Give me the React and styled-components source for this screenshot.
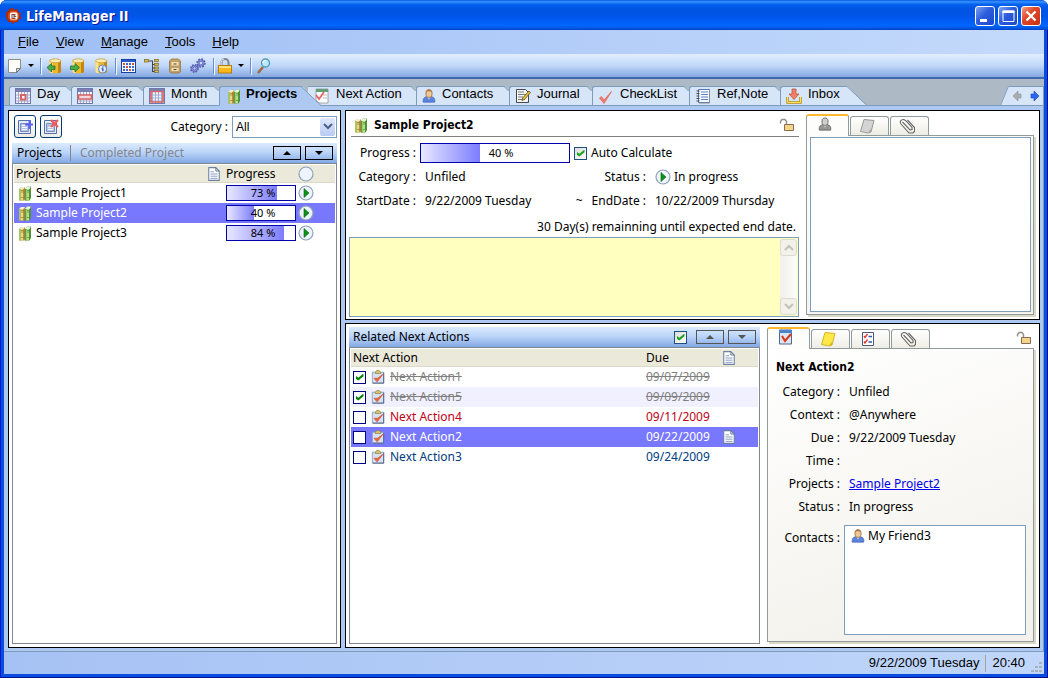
import React, { useState } from "react";
import styled, { createGlobalStyle } from "styled-components";

const uiFont = `"Noto Sans", "DejaVu Sans Condensed", sans-serif`;
const headingFont = `"DejaVu Sans Condensed", "Noto Sans", sans-serif`;
const menuFont = `"Liberation Sans", Arial, sans-serif`;

const MENUS = ["File", "View", "Manage", "Tools", "Help"];

const PROJECTS = [
  { id: 1, name: "Sample Project1", progress: 73 },
  { id: 2, name: "Sample Project2", progress: 40 },
  { id: 3, name: "Sample Project3", progress: 84 },
];

const ACTIONS = [
  { id: 1, name: "Next Action1", due: "09/07/2009", done: true, tone: "done" },
  { id: 5, name: "Next Action5", due: "09/09/2009", done: true, tone: "done" },
  { id: 4, name: "Next Action4", due: "09/11/2009", tone: "late" },
  { id: 2, name: "Next Action2", due: "09/22/2009", note: true },
  { id: 3, name: "Next Action3", due: "09/24/2009" },
];

/* ---------- icons ---------- */

const Icon = ({ size = 16, children }) => (
  <svg width={size} height={size} viewBox="0 0 16 16" aria-hidden="true">
    {children}
  </svg>
);

const AppLogo = () => (
  <Icon>
    <path d="M7 0l2 2 3-1 0 3 3 1-1 3 2 2-3 1-1 3-3 0-2 2-2-2-3 0-1-3-2-2 1-2-1-3 3-1 1-2z" fill="#a82a10" />
    <circle cx="7.500" cy="8" r="5.500" fill="#d8521c" />
    <rect x="4" y="4.500" width="7.500" height="7" rx="1.500" fill="#fff" />
    <path d="M5.500 6h4v1h-3v3h3v1h-4z" fill="#a03820" />
    <path d="M7.500 6.500l3 2-3 1.500z" fill="#555" />
  </Icon>
);

const PageIcon = () => (
  <Icon>
    <path d="M1.500 1.500h12v9l-4 4h-8z" fill="#fcfcf8" stroke="#8c8c88" />
    <path d="M13.500 10.500h-4v4z" fill="#d8d8d0" stroke="#55554f" strokeWidth=".7" />
  </Icon>
);

const Cylinder = () => (
  <g>
    <path d="M3.500 3v10.500c0 2.500 11.500 2.500 11.500 0V3z" fill="#f0b929" />
    <path d="M3.500 3v10.500c0 1 1 1.500 3 1.700V3z" fill="#fbe58c" />
    <path d="M12 3v12.200c2-.4 3-.9 3-1.700V3z" fill="#c48611" />
    <ellipse cx="9.200" cy="2.800" rx="5.700" ry="1.900" fill="#ffeeb0" stroke="#c3922a" strokeWidth=".7" />
  </g>
);

const DbImportIcon = () => (
  <Icon>
    <Cylinder />
    <path d="M1 9.500l4.500-4V8H9v3.500H5.500V14z" fill="#49ad49" stroke="#23702c" strokeWidth=".8" />
  </Icon>
);

const DbExportIcon = () => (
  <Icon>
    <Cylinder />
    <path d="M10.500 9.500L6 5.500V8H1.500v3.500H6V14z" fill="#49ad49" stroke="#23702c" strokeWidth=".8" />
  </Icon>
);

const DbInfoIcon = () => (
  <Icon>
    <Cylinder />
    <circle cx="10.500" cy="11" r="4" fill="#e4eefc" stroke="#6a86bc" />
    <path d="M10 8.500h1.500v1H10zM9.500 10.200h2v3h-1.300v-2h-.7z" fill="#2448a8" />
  </Icon>
);

const CalendarIcon = () => (
  <Icon>
    <rect x=".5" y="1.500" width="14" height="13" fill="#fff" stroke="#1840a0" />
    <path d="M1 2h13v2H1z" fill="#2a5cc8" />
    <path d="M2 5h2v2H2zM11 5h2v2h-2zM5 8h2v2H5zM8 11h2v2H8z" fill="#e0502c" />
    <path d="M5 5h2v2H5zM8 5h2v2H8zM2 8h2v2H2zM8 8h2v2H8zM11 8h2v2h-2zM2 11h2v2H2zM5 11h2v2H5zM11 11h2v2h-2z" fill="#3868d0" />
  </Icon>
);

const TreeIcon = () => (
  <Icon>
    <path d="M4 3h5M8.500 3v11M8.500 6.500H11M8.500 10H11M8.500 13.500H11" stroke="#444" fill="none" />
    <g fill="#d9bd55" stroke="#7c6420" strokeWidth=".7">
      <rect x=".5" y="1.500" width="4" height="2.500" />
      <rect x="10.500" y="1.500" width="4" height="2" />
      <rect x="10.500" y="5.300" width="4" height="2" />
      <rect x="10.500" y="9" width="4" height="2" />
      <rect x="10.500" y="12.500" width="4" height="2" />
    </g>
  </Icon>
);

const CabinetIcon = () => (
  <Icon>
    <path d="M2.500 3l2-2h7l2 2v10.500l-1.500 1.500h-8l-1.500-1.500z" fill="#c8a468" stroke="#94723c" strokeWidth=".8" />
    <path d="M4 3.500h8v4.500H4zM4 9.500h8v4H4z" fill="#f2dfb4" stroke="#a88850" strokeWidth=".6" />
    <path d="M6.500 5.500h3v1h-3zM6.500 11h3v1h-3z" fill="#5a4424" />
  </Icon>
);

const GearsIcon = () => (
  <Icon>
    <g fill="none" stroke="#5058b0">
      <circle cx="11" cy="5" r="2.500" strokeWidth="2" />
      <circle cx="11" cy="5" r="4" strokeWidth="1.500" strokeDasharray="1.800 1.300" />
      <circle cx="4.500" cy="10.500" r="2.300" strokeWidth="2" />
      <circle cx="4.500" cy="10.500" r="3.700" strokeWidth="1.500" strokeDasharray="1.600 1.300" />
    </g>
    <circle cx="11" cy="5" r="2.500" fill="none" stroke="#8c92d8" />
    <circle cx="4.500" cy="10.500" r="2.300" fill="none" stroke="#8c92d8" />
  </Icon>
);

const LockIcon = () => (
  <Icon>
    <path d="M4.500 8V4.500a3.500 3.500 0 017 0V8" fill="none" stroke="#80848c" strokeWidth="2" />
    <path d="M4.200 8V4.500a3.800 3.800 0 013-3.600" fill="none" stroke="#e6e6ea" />
    <rect x="1.500" y="7.500" width="13" height="7.500" fill="#fbb81a" stroke="#b87c08" />
    <path d="M2 8h12v2H2z" fill="#ffe07a" />
  </Icon>
);

const SearchIcon = () => (
  <Icon>
    <path d="M7 9l-5 6" stroke="#a06838" strokeWidth="2.500" />
    <circle cx="9.500" cy="5" r="4" fill="#b8e8fa" stroke="#4896b8" strokeWidth="1.300" />
    <path d="M7 5a2.500 2.500 0 013-2.500" stroke="#fff" fill="none" strokeWidth="1.300" />
  </Icon>
);

const GridCalendar = ({ mark }) => (
  <Icon>
    <rect x=".5" y=".5" width="15" height="15" fill="#f2f4fc" stroke="#7078a8" />
    <path d="M1 1h14v3H1z" fill="#7880b4" />
    <path d="M3.500 4v11M6.500 4v11M9.500 4v11M12.500 4v11M1 7h14M1 10h14M1 13h14" stroke="#a4aad0" />
    {mark}
  </Icon>
);

const DayIcon = () => (
  <GridCalendar mark={<path d="M6 7h4.500v4.500H6z" fill="#fff" stroke="#d86464" strokeWidth="2" />} />
);
const WeekIcon = () => (
  <GridCalendar mark={<path d="M1.500 7h13v4h-13z" fill="#f4d8dc" stroke="#d86464" strokeWidth="1.700" />} />
);
const MonthIcon = () => (
  <GridCalendar mark={<path d="M2 3.500h12v10.500H2z" fill="none" stroke="#d86464" strokeWidth="1.700" />} />
);

const BooksIcon = () => (
  <svg width="13" height="15" viewBox="0 0 13 15" aria-hidden="true">
    <path d="M1 3l2-2h4v12l-1 1.500H1.500L1 14z" fill="#b8963c" />
    <path d="M1 3h2v11.500H1.500L1 14z" fill="#a8c468" />
    <path d="M3 3h2v11.500H3z" fill="#ecd488" />
    <path d="M1 3l2-2h4L5.500 3z" fill="#f4eed4" />
    <path d="M3 4.500h3M3 6h3M3 11.500h3" stroke="#a07828" strokeWidth=".7" />
    <path d="M7 3l2-2.500h4V12l-1.500 2.500H7z" fill="#4c9434" />
    <path d="M7.500 3H9v11.500H7.500z" fill="#8cd468" />
    <path d="M9 3h2v11.500H9z" fill="#b8d88c" />
    <path d="M7 3l2-2.500h4L11.500 3z" fill="#eaf6e0" />
    <path d="M9 4.500h3M9 6h3M9 11.500h3" stroke="#5c8c34" strokeWidth=".7" />
    <path d="M7 3v11.500" stroke="#6c6c34" strokeWidth=".8" />
  </svg>
);

const TickPageIcon = () => (
  <Icon>
    <path d="M2 1h12v14H5L2 12z" fill="#fff" stroke="#909498" strokeWidth=".8" />
    <path d="M2 1h12v3H2z" fill="#60a078" />
    <path d="M9 6h4v2H9zM9 9h4v2H9z" fill="#dcdcdc" />
    <path d="M2 7l3 4 5-7" stroke="#e86060" strokeWidth="1.700" fill="none" />
  </Icon>
);

const PersonIcon = ({ gray, size = 14 }) => (
  <Icon size={size}>
    <path d="M1.500 15c-1-5 2.500-6 4.500-6.500h4c2 .5 5.500 1.500 4.500 6.500z" fill={gray ? "#969696" : "#5c84dc"} stroke={gray ? "#555" : "#3c5cac"} strokeWidth=".8" />
    <path d="M6 9l2 3 2-3z" fill={gray ? "#d4d4d4" : "#b8d4f8"} />
    <path d="M4.500 4.500C4.500 0 11.500 0 11.500 4.500S10 9.500 8 9.500 4.500 9 4.500 4.500z" fill={gray ? "#cfcfcf" : "#f0c898"} stroke={gray ? "#555" : "#94602c"} strokeWidth=".9" />
    {!gray && <path d="M4.500 4c0-5 7-5 7 0-1-2-6-2-7 0z" fill="#a8743c" />}
  </Icon>
);

const JournalIcon = () => (
  <Icon>
    <path d="M1.500 1.500h9l3 3v10h-12z" fill="#f4f4f4" stroke="#44484c" />
    <path d="M3 4h6M3 6.500h8M3 9h5M3 11.500h7" stroke="#787c80" />
    <path d="M14 3l1.500 1.500-6 7L7 12.500l.8-2.700z" fill="#e8c040" stroke="#685010" strokeWidth=".8" />
  </Icon>
);

const CheckIcon = () => (
  <Icon>
    <path d="M1.500 10l2-1.500L6 12l7.500-8.500L6 15.500z" fill="#f08070" stroke="#e06858" strokeWidth=".8" />
  </Icon>
);

const NotebookIcon = () => (
  <Icon>
    <path d="M3.500 1.500h11v13h-11z" fill="#f6faff" stroke="#5878b0" />
    <path d="M6 4h7M6 6.500h7M6 9h7M6 11.500h7" stroke="#5c84c8" />
    <path d="M1.500 3h3M1.500 5.500h3M1.500 8h3M1.500 10.500h3M1.500 13h3" stroke="#3c4860" />
    <path d="M14.500 2v13H4" stroke="#888c94" fill="none" />
  </Icon>
);

const InboxIcon = () => (
  <Icon>
    <path d="M1.500 9v5.500h13V9" fill="none" stroke="#b88a10" strokeWidth="2.500" />
    <path d="M1.500 9v5.500h13V9" fill="none" stroke="#ffe45c" />
    <path d="M6 1h4v5h3l-5 5.500L3 6h3z" fill="#f08068" stroke="#b84c2c" strokeWidth=".7" />
  </Icon>
);

const AddNoteIcon = () => (
  <Icon>
    <path d="M1.500 1.500h12v13h-12z" fill="#e4ecfa" stroke="#5870a8" />
    <path d="M3.500 4.500h8v8h-8z" fill="#b4c4e4" stroke="#7c90c0" />
    <path d="M5 6.500h4M5 8.500h5M5 10.500h5" stroke="#f4f8ff" />
    <path d="M12.500 1v9M8 5.500h8" stroke="#6060f8" strokeWidth="2" />
  </Icon>
);

const RemoveNoteIcon = () => (
  <Icon>
    <path d="M1.500 1.500h12v13h-12z" fill="#e4ecfa" stroke="#5870a8" />
    <path d="M3.500 4.500h8v8h-8z" fill="#b4c4e4" stroke="#7c90c0" />
    <path d="M5 8.500h5M5 10.500h5" stroke="#f4f8ff" />
    <path d="M8 1l7 7M15 1L8 8" stroke="#f85858" strokeWidth="2.200" />
  </Icon>
);

const DocIcon = ({ size = 14 }) => (
  <Icon size={size}>
    <path d="M2 .7h8l4 4v10.600H2z" fill="#fff" stroke="#6c80a4" strokeWidth="1.200" />
    <path d="M10 .7v4h4z" fill="#c8d4e8" stroke="#4c6084" strokeWidth=".8" />
    <path d="M4 5.500h4M4 8h8M4 10.500h8M4 13h8" stroke="#7c90b8" />
  </Icon>
);

const StatusIcon = ({ empty }) => (
  <Icon>
    <circle cx="8" cy="8" r="7" fill="#eef4fc" stroke="#90a0b8" strokeWidth="1.200" />
    {!empty && <path d="M6 3.500L11 8l-5 4.500z" fill="#0c9418" stroke="#08600f" strokeWidth=".6" />}
  </Icon>
);

const UnlockIcon = () => (
  <Icon>
    <path d="M1.500 6.500V4.500l1.500-2h3l1.500 2v3" stroke="#988e88" strokeWidth="1.400" fill="none" />
    <path d="M5.500 7.500h9v6h-9z" fill="#f2d48a" stroke="#8c6c50" />
  </Icon>
);

const TaskIcon = ({ size = 14 }) => (
  <Icon size={size}>
    <path d="M1.500 2.500h13v12.500h-13z" fill="#d4e2f4" stroke="#8c9cbc" />
    <path d="M14.500 3v12H2" stroke="#4c5c80" fill="none" />
    <path d="M5 4V2.500L6.500.7h3L11 2.500V4z" fill="#dcc868" stroke="#80703c" strokeWidth=".7" />
    <path d="M3.500 9.500l3.500 4 6.500-8.500-6 4.500z" fill="#e46848" stroke="#dc5838" />
  </Icon>
);

const CheckedPageIcon = () => (
  <Icon>
    <path d="M1.500 1h12v14h-12z" fill="#dce6f2" stroke="#50688c" />
    <path d="M1 1h13v3H1z" fill="#4c84cc" />
    <path d="M4 7l3 5 6-7" stroke="#d83a20" strokeWidth="2.200" fill="none" />
  </Icon>
);

const StickyIcon = ({ gray }) => (
  <Icon>
    <path d="M5 1.500l10 1L12 14 9 15l-7.500-1.500z" fill={gray ? "#d4d4d4" : "#ffe848"} stroke={gray ? "#999" : "#d4b428"} />
    <path d="M12 14l-.5-3.500L9 15z" fill={gray ? "#aaa" : "#d8b020"} />
  </Icon>
);

const ListIcon = () => (
  <Icon>
    <path d="M2.500 1.500h11v13h-11z" fill="#fff" stroke="#4c587c" />
    <path d="M4 5l1 1.500L7.500 3M4 10.500L5 12l2.500-3.500" stroke="#e03c2c" strokeWidth="1.400" fill="none" />
    <path d="M8.500 5.500H12M8.500 11H12" stroke="#2c58b0" strokeWidth="1.300" />
  </Icon>
);

const ClipIcon = () => (
  <Icon>
    <path d="M3.500 4l7.500 8 2-.5v-2L6.500 2.500C3.500 0 0 3 2 6l8 9h4l1.500-1.500V9.500L8.500 2" stroke="#666" strokeWidth="1.100" fill="none" />
  </Icon>
);

const Triangle = ({ down, color = "#000" }) => (
  <svg width="8" height="4" viewBox="0 0 8 4" aria-hidden="true">
    <path d={down ? "M0 0h8L4 4z" : "M4 0l4 4H0z"} fill={color} />
  </svg>
);

const Chevron = ({ up, color = "#4d6185" }) => (
  <svg width="10" height="7" viewBox="0 0 10 7" aria-hidden="true">
    <path d={up ? "M1 6l4-4 4 4" : "M1 1l4 4 4-4"} fill="none" stroke={color} strokeWidth="2" />
  </svg>
);

const NavArrow = ({ right }) => (
  <svg width="9" height="12" viewBox="0 0 9 12" aria-hidden="true">
    {right ? (
      <path d="M1 4h3V1l5 5-5 5V8H1z" fill="#2868f0" stroke="#1844b0" strokeWidth=".6" />
    ) : (
      <path d="M8 4H5V1L0 6l5 5V8h3z" fill="#a8acb0" stroke="#8c9094" strokeWidth=".6" />
    )}
  </svg>
);

const SmallArrow = () => (
  <svg width="6" height="3" viewBox="0 0 6 3" aria-hidden="true">
    <path d="M0 0h6L3 3z" />
  </svg>
);

const TABS = [
  { label: "Day", icon: DayIcon, width: 62 },
  { label: "Week", icon: WeekIcon, width: 72 },
  { label: "Month", icon: MonthIcon, width: 76 },
  { label: "Projects", icon: BooksIcon, width: 81, active: true },
  { label: "Next Action", icon: TickPageIcon, width: 116, covered: true },
  { label: "Contacts", icon: PersonIcon, width: 93 },
  { label: "Journal", icon: JournalIcon, width: 83 },
  { label: "CheckList", icon: CheckIcon, width: 97 },
  { label: "Ref,Note", icon: NotebookIcon, width: 91 },
  { label: "Inbox", icon: InboxIcon, width: 66, last: true },
];

/* ---------- shell ---------- */

const App = () => (
  <>
    <GlobalStyle />
    <Window>
      <TitleBar>
        <AppLogo />
        <Title>LifeManager II</Title>
        <CaptionButton aria-label="Minimize">
          <svg width="18" height="18" viewBox="0 0 18 18"><path d="M4 12h7v3H4z" fill="#fff" /></svg>
        </CaptionButton>
        <CaptionButton aria-label="Maximize">
          <svg width="18" height="18" viewBox="0 0 18 18">
            <path d="M4 4h11v10.500H4z" fill="none" stroke="#fff" />
            <path d="M3.500 3.500h12v2.500h-12z" fill="#fff" />
          </svg>
        </CaptionButton>
        <CaptionButton $close aria-label="Close">
          <svg width="18" height="18" viewBox="0 0 18 18">
            <path d="M4.500 4.500l9 9M13.500 4.500l-9 9" stroke="#fff" strokeWidth="2.300" />
          </svg>
        </CaptionButton>
      </TitleBar>
      <Frame>
        <MenuBar>
          {MENUS.map((menu) => (
            <MenuItem key={menu}>
              <u>{menu[0]}</u>
              {menu.slice(1)}
            </MenuItem>
          ))}
        </MenuBar>
        <Toolbar>
          <ToolButton $width={20} aria-label="New"><PageIcon /></ToolButton>
          <ToolButton $width={11} aria-label="New options"><SmallArrow /></ToolButton>
          <ToolSeparator />
          <ToolButton aria-label="Import"><DbImportIcon /></ToolButton>
          <ToolButton aria-label="Export"><DbExportIcon /></ToolButton>
          <ToolButton aria-label="Database info"><DbInfoIcon /></ToolButton>
          <ToolSeparator />
          <ToolButton aria-label="Calendar"><CalendarIcon /></ToolButton>
          <ToolButton aria-label="Categories"><TreeIcon /></ToolButton>
          <ToolButton aria-label="Cabinet"><CabinetIcon /></ToolButton>
          <ToolButton aria-label="Settings"><GearsIcon /></ToolButton>
          <ToolSeparator />
          <ToolButton $width={20} aria-label="Lock"><LockIcon /></ToolButton>
          <ToolButton $width={11} aria-label="Lock options"><SmallArrow /></ToolButton>
          <ToolSeparator />
          <ToolButton aria-label="Search"><SearchIcon /></ToolButton>
        </Toolbar>
        <TabStrip>
          {TABS.map(({ label, icon: TabGlyph, width, active, covered, last }) => (
            <MainTab key={label} $width={width} $active={active} $covered={covered}>
              <TabGlyph />
              <TabText>{label}</TabText>
              {active || last ? (
                <Slope width="22" height="20" viewBox="0 0 22 20" aria-hidden="true">
                  <path d="M0 0h1l20 20H0z" fill={active ? "#adc9f1" : "#d7e5f8"} />
                  {active && <path d="M2 0h6L8 7z" fill="#aeb9c6" />}
                  <path d="M0 .5h1l20 19" fill="none" stroke="#7b9cba" />
                  {last && <path d="M0 19.500h22" stroke="#7b9cba" />}
                </Slope>
              ) : (
                <Bevel width="5" height="5" viewBox="0 0 5 5" aria-hidden="true">
                  <path d="M0 0h5v5z" fill="#aeb9c6" />
                  <path d="M0 .5l5 5" stroke="#7b9cba" />
                </Bevel>
              )}
            </MainTab>
          ))}
          <StripFill />
          <TabNav>
            <svg width="9" height="20" viewBox="0 0 9 20" aria-hidden="true">
              <path d="M9 0v20H0L8 0z" fill="#d7e5f8" />
              <path d="M.5 19.500L8.500 0M0 19.500h9" stroke="#7b9cba" />
            </svg>
            <NavButtons>
              <NavButton aria-label="Previous tab"><NavArrow /></NavButton>
              <NavButton aria-label="Next tab"><NavArrow right /></NavButton>
            </NavButtons>
          </TabNav>
        </TabStrip>
        <Workspace>
          <ProjectList />
          <RightSide>
            <ProjectDetails />
            <ActionPanel />
          </RightSide>
        </Workspace>
        <StatusBar>
          <span>9/22/2009 Tuesday</span>
          <StatusDivider />
          <span>20:40</span>
          <svg width="12" height="12" viewBox="0 0 12 12" aria-hidden="true">
            <path d="M8 0h3v2H8zM4 4h3v2H4zM8 4h3v2H8zM0 8h3v2H0zM4 8h3v2H4zM8 8h3v2H8z" fill="#a8b0b8" />
          </svg>
        </StatusBar>
      </Frame>
    </Window>
  </>
);

/* ---------- project list ---------- */

const ProjectList = () => {
  const [selected, setSelected] = useState(2);

  return (
    <Panel>
      <ListTools>
        <FramedButton aria-label="Add project"><AddNoteIcon /></FramedButton>
        <FramedButton aria-label="Delete project"><RemoveNoteIcon /></FramedButton>
        <CategoryLabel htmlFor="category">Category :</CategoryLabel>
        <SelectBox>
          <Select id="category" defaultValue="All">
            <option>All</option>
            <option>Unfiled</option>
          </Select>
          <SelectArrow><Chevron /></SelectArrow>
        </SelectBox>
      </ListTools>
      <BarHeader>
        <BarTab $active>Projects</BarTab>
        <BarTab>Completed Project</BarTab>
        <MoveButtons>
          <MoveButton aria-label="Move up"><Triangle /></MoveButton>
          <MoveButton aria-label="Move down"><Triangle down /></MoveButton>
        </MoveButtons>
      </BarHeader>
      <ListBox>
        <Table>
          <colgroup>
            <col />
            <col width="19" />
            <col width="72" />
            <col width="39" />
          </colgroup>
          <thead>
            <tr>
              <th>Projects</th>
              <th><CellIcon><DocIcon /></CellIcon></th>
              <th>Progress</th>
              <th><CellIcon><StatusIcon empty /></CellIcon></th>
            </tr>
          </thead>
          <tbody>
            {PROJECTS.map((project) => (
              <TableRow
                key={project.id}
                $selected={project.id === selected}
                onClick={() => setSelected(project.id)}
              >
                <td>
                  <NameCell $indent={2}>
                    <BooksIcon />
                    {project.name}
                  </NameCell>
                </td>
                <td />
                <td><ProgressBar value={project.progress} /></td>
                <td><CellIcon><StatusIcon /></CellIcon></td>
              </TableRow>
            ))}
          </tbody>
        </Table>
      </ListBox>
    </Panel>
  );
};

const ProgressBar = ({ value, large }) => (
  <Bar $large={large}>
    <BarFill style={{ width: `${value}%` }} />
    <BarText $large={large}>{value} %</BarText>
  </Bar>
);

/* ---------- project details ---------- */

const ProjectDetails = () => (
  <TopPanel>
    <Details>
      <DetailHeader>
        <BooksIcon />
        <Heading>Sample Project2</Heading>
        <UnlockIcon />
      </DetailHeader>
      <DetailRow>
        <FieldLabel $width={67}>Progress :</FieldLabel>
        <ProgressBar value={40} large />
        <Check id="auto-calculate" type="checkbox" defaultChecked />
        <label htmlFor="auto-calculate">Auto Calculate</label>
      </DetailRow>
      <DetailRow>
        <FieldLabel $width={67}>Category :</FieldLabel>
        <FieldValue $width={136}>Unfiled</FieldValue>
        <FieldLabel $width={86}>Status :</FieldLabel>
        <FieldValue>
          <StatusIcon />
          In progress
        </FieldValue>
      </DetailRow>
      <DetailRow>
        <FieldLabel $width={67}>StartDate :</FieldLabel>
        <FieldValue $width={136}>9/22/2009 Tuesday</FieldValue>
        <FieldLabel $width={86}>
          <Tilde>~</Tilde>
          EndDate :
        </FieldLabel>
        <FieldValue>10/22/2009 Thursday</FieldValue>
      </DetailRow>
      <Remaining>30 Day(s) remainning until expected end date.</Remaining>
      <MemoBox>
        <Memo aria-label="Project memo" />
        <ScrollTrack>
          <ScrollButton aria-label="Scroll up"><Chevron up color="#c4c2b8" /></ScrollButton>
          <ScrollButton aria-label="Scroll down"><Chevron color="#c4c2b8" /></ScrollButton>
        </ScrollTrack>
      </MemoBox>
    </Details>
    <SideTabs>
      <SideTabRow>
        <SideTab $active aria-label="Contacts"><PersonIcon gray /></SideTab>
        <SideTab aria-label="Notes"><StickyIcon gray /></SideTab>
        <SideTab aria-label="Attachments"><ClipIcon /></SideTab>
      </SideTabRow>
      <SideBody $plain>
        <SideList />
      </SideBody>
    </SideTabs>
  </TopPanel>
);

/* ---------- next actions ---------- */

const ActionPanel = () => {
  const [selected, setSelected] = useState(2);

  return (
    <BottomPanel>
      <ActionList>
        <BarHeader>
          <BarTitle>Related Next Actions</BarTitle>
          <Check type="checkbox" defaultChecked aria-label="Show completed" />
          <MoveButtons>
            <MoveButton $muted aria-label="Move up"><Triangle color="#555" /></MoveButton>
            <MoveButton $muted aria-label="Move down"><Triangle down color="#555" /></MoveButton>
          </MoveButtons>
        </BarHeader>
        <ListBox>
          <Table>
            <colgroup>
              <col />
              <col width="74" />
              <col width="40" />
            </colgroup>
            <thead>
              <tr>
                <th>Next Action</th>
                <th>Due</th>
                <th><NoteCell><DocIcon /></NoteCell></th>
              </tr>
            </thead>
            <tbody>
              {ACTIONS.map((action, index) => (
                <TableRow
                  key={action.id}
                  $selected={action.id === selected}
                  $striped={index === 1}
                  $tone={action.tone || "open"}
                  onClick={() => setSelected(action.id)}
                >
                  <td>
                    <NameCell $indent={0}>
                      <Check
                        $square
                        type="checkbox"
                        defaultChecked={action.done}
                        aria-label={`${action.name} done`}
                      />
                      <TaskIcon />
                      <ActionText>{action.name}</ActionText>
                    </NameCell>
                  </td>
                  <td><ActionText>{action.due}</ActionText></td>
                  <td>{action.note && <NoteCell><DocIcon /></NoteCell>}</td>
                </TableRow>
              ))}
            </tbody>
          </Table>
        </ListBox>
      </ActionList>
      <ActionTabs>
        <SideTabRow>
          <SideTab $active aria-label="Action"><CheckedPageIcon /></SideTab>
          <SideTab aria-label="Note"><StickyIcon /></SideTab>
          <SideTab aria-label="Checklist"><ListIcon /></SideTab>
          <SideTab aria-label="Attachments"><ClipIcon /></SideTab>
          <RowLock><UnlockIcon /></RowLock>
        </SideTabRow>
        <SideBody>
          <ActionHeading>Next Action2</ActionHeading>
          <ActionRow><FieldLabel $width={72}>Category :</FieldLabel><FieldValue>Unfiled</FieldValue></ActionRow>
          <ActionRow><FieldLabel $width={72}>Context :</FieldLabel><FieldValue>@Anywhere</FieldValue></ActionRow>
          <ActionRow><FieldLabel $width={72}>Due :</FieldLabel><FieldValue>9/22/2009 Tuesday</FieldValue></ActionRow>
          <ActionRow><FieldLabel $width={72}>Time :</FieldLabel></ActionRow>
          <ActionRow>
            <FieldLabel $width={72}>Projects :</FieldLabel>
            <FieldValue><a href="#project">Sample Project2</a></FieldValue>
          </ActionRow>
          <ActionRow><FieldLabel $width={72}>Status :</FieldLabel><FieldValue>In progress</FieldValue></ActionRow>
          <ContactRow>
            <FieldLabel $width={72}>Contacts :</FieldLabel>
            <ContactList>
              <Contact>
                <PersonIcon />
                My Friend3
              </Contact>
            </ContactList>
          </ContactRow>
        </SideBody>
      </ActionTabs>
    </BottomPanel>
  );
};

/* ---------- styles ---------- */

const GlobalStyle = createGlobalStyle`
  * {
    box-sizing: border-box;
  }

  body {
    margin: 0;
    font: 12px/16px ${uiFont};
    color: #000;
  }

  button {
    font: inherit;
    color: inherit;
    padding: 0;
    border: 0;
    background: none;
  }

  svg {
    display: block;
    flex-shrink: 0;
  }
`;

const Window = styled.div`
  min-height: 100vh;
  display: flex;
  flex-direction: column;
  background: #0a4be0;
  border-radius: 7px 7px 0 0;
  box-shadow: inset 1px 0 #0019cf, inset -1px -1px #00138c;
`;

const TitleBar = styled.header`
  height: 30px;
  display: flex;
  align-items: center;
  gap: 3px;
  padding: 2px 7px 0 6px;
  border-radius: 7px 7px 0 0;
  background: linear-gradient(
    #0058e6 0%,
    #3a93ff 6%,
    #0463ee 14%,
    #0054e3 30%,
    #0055e8 55%,
    #0066ff 85%,
    #0058e0 94%,
    #003dc4 100%
  );
`;

const Title = styled.h1`
  flex: 1;
  margin: 0 0 0 1px;
  font: bold 14px/18px ${headingFont};
  color: #fff;
  text-shadow: 1px 1px #0f1089;
`;

const CaptionButton = styled.button`
  width: 20px;
  height: 20px;
  border: 1px solid #fff;
  border-radius: 3px;
  background: ${({ $close }) =>
    $close
      ? "linear-gradient(135deg, #f0a088, #e0482a 40%, #c83010)"
      : "linear-gradient(135deg, #7ca4f4, #2c5cdc 45%, #1c48cc)"};
`;

const Frame = styled.div`
  flex: 1;
  display: flex;
  flex-direction: column;
  margin: 0 4px 4px;
  background: #adc9f1;
`;

const MenuBar = styled.nav`
  height: 24px;
  display: flex;
  padding-left: 5px;
  background: linear-gradient(90deg, #9ebef5, #c4dafb);
`;

const MenuItem = styled.button`
  padding: 0 8px 0 9px;
  font: 13px/22px ${menuFont};
`;

const Toolbar = styled.div`
  height: 25px;
  display: flex;
  align-items: center;
  padding-left: 1px;
  background: linear-gradient(#e2eefe, #c0d8fa 50%, #84a8e0);
  border-bottom: 2px solid #4068b0;
`;

const ToolButton = styled.button`
  width: ${({ $width = 23 }) => $width}px;
  height: 22px;
  display: flex;
  align-items: center;
  justify-content: center;
`;

const ToolSeparator = styled.span`
  width: 1px;
  height: 16px;
  margin: 0 1px 0 4px;
  background: #6a8ccb;
  box-shadow: 1px 1px #f1f9ff;
`;

const TabStrip = styled.div`
  height: 27px;
  display: flex;
  align-items: flex-end;
  background: #aeb9c6;

  &::before {
    content: "";
    width: 5px;
    border-bottom: 1px solid #7b9cba;
  }
`;

const MainTab = styled.button`
  position: relative;
  display: flex;
  align-items: center;
  gap: 6px;
  width: ${({ $width }) => $width}px;
  height: 20px;
  padding: 0 0 0 ${({ $covered, $active }) => ($covered ? 13 : $active ? 7 : 5)}px;
  white-space: nowrap;
  border: 1px solid #7b9cba;
  border-right: 0;
  border-bottom-color: ${({ $active }) => ($active ? "#adc9f1" : "#7b9cba")};
  border-top-left-radius: 3px;
  background: ${({ $active }) => ($active ? "#adc9f1" : "#d7e5f8")};
  z-index: ${({ $active }) => ($active ? 1 : 0)};
  font: ${({ $active }) => ($active ? "bold" : "normal")} 13px/16px ${menuFont};
`;

const TabText = styled.span`
  padding-bottom: 4px;
`;

const Slope = styled.svg`
  position: absolute;
  left: 100%;
  top: -1px;
`;

const Bevel = styled.svg`
  position: absolute;
  right: 0;
  top: -1px;
`;

const StripFill = styled.div`
  flex: 1;
  border-bottom: 1px solid #7b9cba;
`;

const TabNav = styled.div`
  display: flex;
  border-right: 1px solid #7b9cba;
`;

const NavButtons = styled.div`
  display: flex;
  gap: 8px;
  padding: 0 4px;
  border-top: 1px solid #7b9cba;
  border-bottom: 1px solid #7b9cba;
  background: #d7e5f8;
`;

const NavButton = styled.button`
  width: 9px;
  height: 18px;
`;

const Workspace = styled.main`
  flex: 1;
  display: grid;
  grid-template-columns: 333px 1fr;
  gap: 4px;
  padding: 4px 3px 3px 4px;
  border-right: 1px solid #7b9cba;
  border-bottom: 1px solid #7b9cba;
`;

const RightSide = styled.div`
  display: grid;
  grid-template-rows: auto 1fr;
  gap: 3px;
  min-width: 0;
`;

const Panel = styled.section`
  display: flex;
  flex-direction: column;
  padding: 3px;
  border: 1px solid #000;
  background: #fff;
  min-width: 0;
`;

const TopPanel = styled(Panel)`
  flex-direction: row;
  gap: 7px;
  padding-bottom: 2px;
`;

const BottomPanel = styled(Panel)`
  flex-direction: row;
  gap: 7px;
`;

const ListTools = styled.div`
  display: flex;
  align-items: center;
  gap: 4px;
  padding: 1px 0 5px 2px;
`;

const FramedButton = styled.button`
  width: 22px;
  height: 23px;
  display: flex;
  align-items: center;
  justify-content: center;
  border: 1px solid #003c74;
  border-radius: 3px;
  background: linear-gradient(#fff, #ecebe5);
`;

const CategoryLabel = styled.label`
  margin-left: auto;
`;

const SelectBox = styled.div`
  position: relative;
  width: 105px;
  height: 22px;
`;

const Select = styled.select`
  appearance: none;
  width: 100%;
  height: 100%;
  padding: 0 20px 0 3px;
  border: 1px solid #7f9db9;
  border-radius: 0;
  background: #fff;
  color: #000;
  font: 12px ${menuFont};
`;

const SelectArrow = styled.span`
  position: absolute;
  top: 2px;
  right: 2px;
  bottom: 2px;
  width: 15px;
  display: flex;
  align-items: center;
  justify-content: center;
  border-radius: 2px;
  background: linear-gradient(#e0e8fe, #b8cbf4);
  pointer-events: none;
`;

const BarHeader = styled.div`
  height: 20px;
  display: flex;
  align-items: center;
  padding: 0 4px;
  background: linear-gradient(#dcebfe, #b8d2f8 50%, #82a8e4);
`;

const BarTab = styled.button`
  padding: 0 ${({ $active }) => ($active ? 8 : 9)}px 0 ${({ $active }) => ($active ? 1 : 9)}px;
  color: ${({ $active }) => ($active ? "#000" : "#84868c")};
  border-right: ${({ $active }) => ($active ? "1px solid #84868c" : "0")};
`;

const BarTitle = styled.h2`
  flex: 1;
  margin: 0;
  font: 12px/16px ${uiFont};
`;

const MoveButtons = styled.div`
  display: flex;
  gap: 4px;
  margin-left: auto;
`;

const MoveButton = styled.button`
  width: 28px;
  height: 14px;
  display: flex;
  align-items: center;
  justify-content: center;
  border: 1px solid ${({ $muted }) => ($muted ? "#555" : "#000")};
`;

const ListBox = styled.div`
  flex: 1;
  padding: 1px;
  border: 1px solid #828790;
  background: #fff;
`;

const Table = styled.table`
  width: 100%;
  table-layout: fixed;
  border-collapse: collapse;

  th,
  td {
    height: 20px;
    padding: 0 2px;
    text-align: left;
    font-weight: normal;
    white-space: nowrap;
  }

  th {
    height: 18px;
    background: #ebe9da;
    box-shadow: inset 0 -1px #dcd9c8;
  }
`;

const rowColor = ({ $selected, $tone }) => {
  if ($selected) return "#fff";
  if ($tone === "done") return "#808080";
  if ($tone === "late") return "#c00018";
  if ($tone === "open") return "#003c80";
  return "#000";
};

const ActionText = styled.span``;

const TableRow = styled.tr`
  background: ${({ $selected, $striped }) =>
    $selected ? "#7878ff" : $striped ? "#f0f0ff" : "transparent"};
  color: ${rowColor};
  cursor: default;

  ${ActionText} {
    text-decoration: ${({ $tone }) => ($tone === "done" ? "line-through" : "none")};
  }
`;

const NameCell = styled.div`
  display: flex;
  align-items: center;
  gap: 5px;
  padding-left: ${({ $indent }) => $indent}px;
`;

const CellIcon = styled.div`
  display: flex;
`;

const NoteCell = styled.div`
  display: flex;
  padding-left: 2px;
`;

const Bar = styled.div`
  position: relative;
  width: ${({ $large }) => ($large ? 150 : 70)}px;
  height: ${({ $large }) => ($large ? 20 : 16)}px;
  border: 1px solid #0000a8;
  background: #fff;
  color: #000;
`;

const BarFill = styled.div`
  height: 100%;
  background: linear-gradient(90deg, #e8e8ff, #7c7cff);
`;

const BarText = styled.span`
  position: absolute;
  inset: 0;
  display: flex;
  align-items: center;
  justify-content: center;
  padding-left: ${({ $large }) => ($large ? 12 : 4)}px;
  font-size: 11px;
`;

const Details = styled.div`
  flex: 1;
  display: flex;
  flex-direction: column;
  min-width: 0;
`;

const DetailHeader = styled.div`
  height: 23px;
  display: flex;
  align-items: center;
  gap: 7px;
  margin: 0 0 4px 2px;
  padding: 0 4px 0 3px;
  border-bottom: 1px solid #808080;
`;

const Heading = styled.h2`
  flex: 1;
  margin: 0;
  font: bold 12px/16px ${headingFont};
`;

const DetailRow = styled.div`
  height: 24px;
  display: flex;
  align-items: center;
  gap: 4px;
`;

const FieldLabel = styled.span`
  width: ${({ $width }) => $width}px;
  flex-shrink: 0;
  text-align: right;
  white-space: nowrap;
`;

const FieldValue = styled.span`
  width: ${({ $width }) => ($width ? `${$width}px` : "auto")};
  display: flex;
  align-items: center;
  gap: 3px;
  padding-left: 5px;
  white-space: nowrap;

  a {
    color: #0000ee;
  }
`;

const Tilde = styled.span`
  margin-right: 9px;
`;

const Remaining = styled.p`
  margin: 6px 3px 2px;
  text-align: right;
`;

const MemoBox = styled.div`
  flex: 1;
  display: flex;
  min-height: 80px;
  padding: 1px;
  border: 1px solid #7f9db9;
  background: #ffffc0;
`;

const Memo = styled.textarea`
  flex: 1;
  min-width: 0;
  border: 0;
  padding: 2px;
  resize: none;
  overflow: hidden;
  background: transparent;
  font: 12px/16px ${uiFont};
`;

const ScrollTrack = styled.div`
  width: 17px;
  display: flex;
  flex-direction: column;
  justify-content: space-between;
  background: linear-gradient(90deg, #f0efea, #fdfdfb);
`;

const ScrollButton = styled.button`
  height: 17px;
  display: flex;
  align-items: center;
  justify-content: center;
  border: 1px solid #dedcd0;
  border-radius: 3px;
  background: #f2f1ea;
`;

const Check = styled.input`
  appearance: none;
  width: 13px;
  height: 13px;
  flex-shrink: 0;
  display: grid;
  place-items: center;
  margin: 0;
  border: 1px solid ${({ $square }) => ($square ? "#000080" : "#1c5180")};
  background: ${({ $square }) => ($square ? "#fff" : "linear-gradient(135deg, #dcdcd7, #fff)")};

  &:checked::after {
    content: "";
    width: 8px;
    height: 7px;
    background: ${({ $square }) => ($square ? "#008000" : "#21a121")};
    clip-path: polygon(0 30%, 35% 60%, 100% 0, 100% 40%, 35% 100%, 0 72%);
  }
`;

const SideTabs = styled.div`
  width: 230px;
  display: flex;
  flex-direction: column;
`;

const ActionTabs = styled(SideTabs)`
  width: 269px;
`;

const SideTabRow = styled.div`
  height: 21px;
  display: flex;
  align-items: flex-end;
  gap: 1px;
`;

const SideTab = styled.button`
  width: ${({ $active }) => ($active ? 43 : 39)}px;
  height: ${({ $active }) => ($active ? 22 : 19)}px;
  display: flex;
  align-items: center;
  justify-content: center;
  margin-bottom: ${({ $active }) => ($active ? -1 : 0)}px;
  padding: 0 5px ${({ $active }) => ($active ? 4 : 0)}px 0;
  border: 1px solid #919b9c;
  border-bottom: 0;
  border-top: ${({ $active }) => ($active ? "2px solid #ffb830" : "1px solid #919b9c")};
  border-radius: 3px 3px 0 0;
  background: ${({ $active }) => ($active ? "#fdfdfc" : "linear-gradient(#fff, #eeede4)")};
  z-index: 1;
`;

const RowLock = styled.span`
  align-self: center;
  margin-left: auto;
  padding-right: 4px;
`;

const SideBody = styled.div`
  flex: 1;
  display: flex;
  flex-direction: column;
  margin: 0 2px 2px 0;
  padding: ${({ $plain }) => ($plain ? "1px 2px 2px 3px" : "8px 7px 6px 0")};
  border: 1px solid #919b9c;
  box-shadow: 2px 2px #dcd8c8;
  background: linear-gradient(160deg, #fff, #f3f2ec 85%);
`;

const SideList = styled.div`
  flex: 1;
  border: 1px solid #7f9db9;
  background: #fff;
`;

const ActionList = styled.div`
  flex: 1;
  display: flex;
  flex-direction: column;
  min-width: 0;

  ${BarHeader} ${Check} {
    margin-right: 9px;
  }
`;

const ActionHeading = styled.h2`
  margin: 2px 0 5px 8px;
  font: bold 12px/16px ${headingFont};
`;

const ActionRow = styled.div`
  height: 23px;
  display: flex;
  align-items: center;
  gap: 4px;
`;

const ContactRow = styled.div`
  flex: 1;
  display: flex;
  gap: 4px;
  padding-top: 7px;

  ${FieldLabel} {
    padding-top: 5px;
  }
`;

const ContactList = styled.ul`
  flex: 1;
  margin: 0;
  padding: 2px 6px;
  list-style: none;
  border: 1px solid #7f9db9;
  background: #fff;
`;

const Contact = styled.li`
  display: flex;
  align-items: center;
  gap: 3px;
`;

const StatusBar = styled.footer`
  height: 22px;
  display: flex;
  align-items: center;
  justify-content: flex-end;
  gap: 6px;
  padding-right: 1px;
  background: linear-gradient(90deg, #a6c2f4, #c0d6fa);
  font: 13px/18px ${menuFont};

  svg {
    align-self: flex-end;
  }
`;

const StatusDivider = styled.span`
  width: 1px;
  height: 17px;
  background: #a8a490;
`;

export default App;
